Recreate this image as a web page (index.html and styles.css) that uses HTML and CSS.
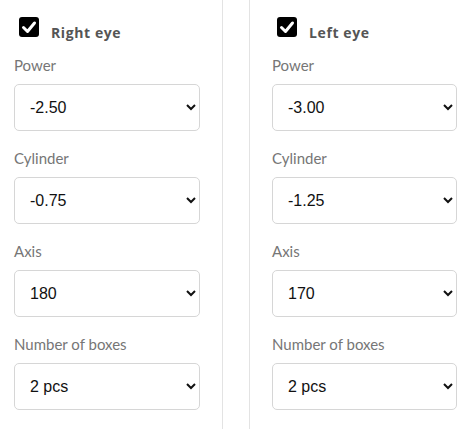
FILE: index.html
```
<!DOCTYPE html>
<html lang="en">
<head>
  <meta charset="UTF-8" />
  <title>Lens prescription</title>
  <link rel="stylesheet" href="styles.css">
</head>
<body>
<div class="eyes">

  <!-- Right eye -->
  <div class="eye eye-right">
    <label class="eye-head">
      <span class="check">
        <svg viewBox="0 0 20 20" width="20" height="20"><path d="M4.5 10.5 L8.5 14.5 L15.5 6" fill="none" stroke="#fff" stroke-width="3" stroke-linecap="round" stroke-linejoin="round"/></svg>
      </span>
      <span class="eye-title">Right eye</span>
    </label>

    <div class="field">
      <label>Power</label>
      <select><option>-2.50</option></select>
    </div>
    <div class="field">
      <label>Cylinder</label>
      <select><option>-0.75</option></select>
    </div>
    <div class="field">
      <label>Axis</label>
      <select><option>180</option></select>
    </div>
    <div class="field">
      <label>Number of boxes</label>
      <select><option>2 pcs</option></select>
    </div>
  </div>

  <!-- Left eye -->
  <div class="eye eye-left">
    <label class="eye-head">
      <span class="check">
        <svg viewBox="0 0 20 20" width="20" height="20"><path d="M4.5 10.5 L8.5 14.5 L15.5 6" fill="none" stroke="#fff" stroke-width="3" stroke-linecap="round" stroke-linejoin="round"/></svg>
      </span>
      <span class="eye-title">Left eye</span>
    </label>

    <div class="field">
      <label>Power</label>
      <select><option>-3.00</option></select>
    </div>
    <div class="field">
      <label>Cylinder</label>
      <select><option>-1.25</option></select>
    </div>
    <div class="field">
      <label>Axis</label>
      <select><option>170</option></select>
    </div>
    <div class="field">
      <label>Number of boxes</label>
      <select><option>2 pcs</option></select>
    </div>
  </div>

</div>
</body>
</html>
```

FILE: styles.css
```
html, body {
  margin: 0;
  padding: 0;
  height: 100%;
  background: #fff;
  font-family: "Lato", "Open Sans", sans-serif;
  color: #555;
}

/* two columns, each with its own divider line */
.eyes {
  display: flex;
  height: 100%;
}
.eye {
  box-sizing: border-box;
  height: 100%;
  padding-top: 17px;
}
.eye-right {
  width: 223px;
  padding-left: 14px;
  padding-right: 22px;
  border-right: 1px solid #e3e3e3;
}
.eye-left {
  flex: 1;
  margin-left: 26px;
  padding-left: 22px;
  padding-right: 14px;
  border-left: 1px solid #e3e3e3;
}

/* checkbox + eye title */
.eye-head {
  display: flex;
  align-items: center;
  height: 20px;
  margin-left: 5px;
  margin-bottom: 18px;
}
.check {
  width: 20px;
  height: 20px;
  background: #000;
  border-radius: 3px;
  display: flex;
}
.eye-title {
  margin-left: 12px;
  margin-top: 10px;
  font-family: "Open Sans", sans-serif;
  font-weight: 700;
  font-size: 14px;
  letter-spacing: 0.6px;
  color: #555;
}

/* label + select rows */
.field {
  display: flex;
  flex-direction: column;
  margin-bottom: 17px;
}
.field label {
  font-size: 15px;
  line-height: 20px;
  color: #767676;
  margin-bottom: 9px;
}
.field select {
  width: 100%;
  height: 47px;
  box-sizing: border-box;
  padding: 0 8px 0 11px;
  border: 1px solid #d6d6d6;
  border-radius: 5px;
  background: #fff;
  font-family: "Liberation Sans", Arial, sans-serif;
  font-size: 16px;
  color: #111;
}
```
